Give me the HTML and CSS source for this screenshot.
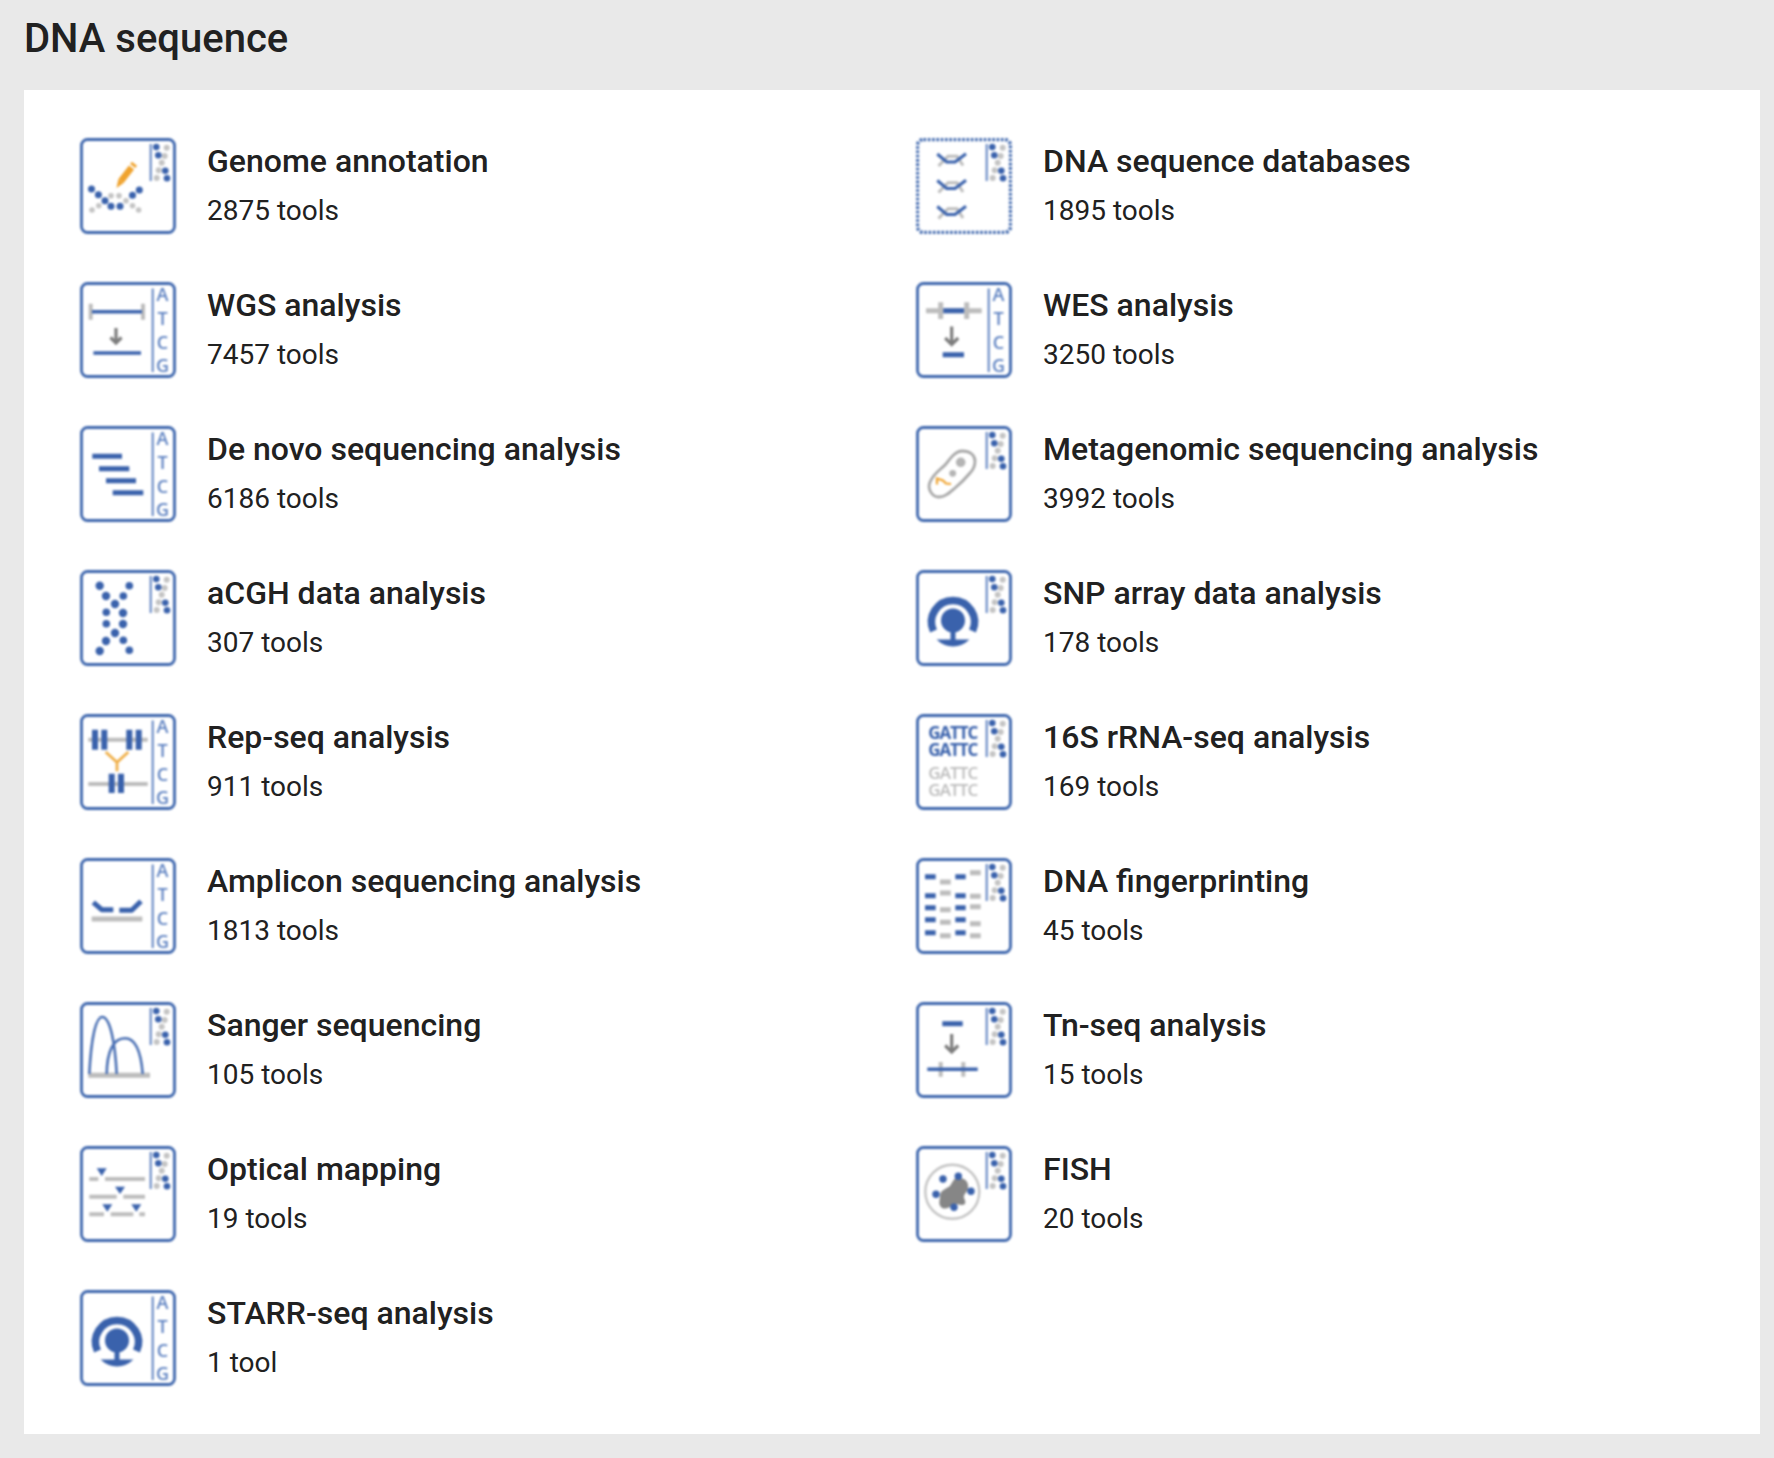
FILE: index.html
```html
<!DOCTYPE html>
<html lang="en">
<head>
    <meta charset="UTF-8">
    <meta name="viewport" content="width=device-width, initial-scale=1.0">
    <title>DNA sequence</title>
    <link rel="stylesheet" href="styles.css">
</head>
<body>
    <!-- shared icon parts -->
    <svg class="icon-defs" xmlns="http://www.w3.org/2000/svg">
        <symbol id="frame" viewBox="0 0 96 96">
            <rect class="frame" x="1.5" y="1.5" width="93" height="93" rx="6"/>
        </symbol>
        <symbol id="atcg" viewBox="0 0 96 96">
            <path class="side-line" d="M72.7 6.5V90"/>
            <text class="side-text" x="82.5" y="18.5">A</text>
            <text class="side-text" x="82.5" y="42.5">T</text>
            <text class="side-text" x="82.5" y="66.5">C</text>
            <text class="side-text" x="82.5" y="89.5">G</text>
        </symbol>
        <symbol id="dots" viewBox="0 0 96 96">
            <path class="side-line" d="M70.7 6V43"/>
            <g class="fill-grey">
                <circle cx="86.7" cy="9.7" r="3"/>
                <circle cx="84.7" cy="18" r="3"/>
                <circle cx="81.7" cy="24.7" r="3"/>
                <circle cx="78.7" cy="32.3" r="3"/>
                <circle cx="76.7" cy="40" r="3"/>
            </g>
            <g class="fill-blue">
                <circle cx="76.3" cy="9" r="3.3"/>
                <circle cx="78.3" cy="17.3" r="3.3"/>
                <circle cx="85.3" cy="32.7" r="3.3"/>
                <circle cx="87" cy="40.3" r="3.3"/>
            </g>
        </symbol>
        <symbol id="receptor" viewBox="0 0 96 96">
            <path class="ring" d="M17.5 61A21.5 21.5 0 1 1 56.5 61"/>
            <circle class="fill-blue" cx="37" cy="50.5" r="12"/>
            <path class="stem" d="M37 58V72"/>
            <path class="fill-blue" d="M20.5 69.5H53.5Q46 76.5 37 76.5Q28 76.5 20.5 69.5Z"/>
        </symbol>
        <symbol id="motif" viewBox="0 0 96 96">
            <path class="thin-grey" d="M22.5 28L32 18.3H41L47 27.5"/>
            <path class="thin-blue" d="M21.3 16L30.7 24H39L50 15.7"/>
        </symbol>
    </svg>

    <h1 class="page-title">DNA sequence</h1>

    <div class="card">
        <div class="tool-item">
            <svg class="tool-icon" viewBox="0 0 96 96">
                <use href="#frame"/><use href="#dots"/>
                <path class="pencil" d="M41 43L51.5 29.5M52.7 28L54.5 25.7"/>
                <path class="pencil-tip" d="M38.4 41L43.6 45L36.5 50Z"/>
                <g class="fill-grey">
                    <circle cx="12" cy="72" r="2.8"/><circle cx="18.8" cy="67.7" r="2.8"/><circle cx="31" cy="57.7" r="2.8"/>
                    <circle cx="39" cy="57.7" r="2.8"/><circle cx="46" cy="62.7" r="2.8"/><circle cx="52.5" cy="67.7" r="2.8"/><circle cx="58.6" cy="72" r="2.8"/>
                </g>
                <g class="fill-blue">
                    <circle cx="11.5" cy="51" r="3.5"/><circle cx="18.4" cy="56.7" r="3.5"/><circle cx="25" cy="62.7" r="3.5"/><circle cx="31" cy="68.3" r="3.5"/>
                    <circle cx="40" cy="68.3" r="3.5"/><circle cx="52.5" cy="57.3" r="3.5"/><circle cx="59.3" cy="52" r="3.5"/>
                </g>
            </svg>
            <div class="tool-text"><div class="tool-name">Genome annotation</div><div class="tool-count">2875 tools</div></div>
        </div>

        <div class="tool-item">
            <svg class="tool-icon" viewBox="0 0 96 96">
                <use href="#frame"/><use href="#dots"/>
                <use href="#motif"/><use href="#motif" y="26.5"/><use href="#motif" y="52.5"/>
                <rect class="frame-cover" x="1.5" y="1.5" width="93" height="93" rx="6"/>
                <rect class="frame-dotted" x="1.5" y="1.5" width="93" height="93" rx="6"/>
            </svg>
            <div class="tool-text"><div class="tool-name">DNA sequence databases</div><div class="tool-count">1895 tools</div></div>
        </div>

        <div class="tool-item">
            <svg class="tool-icon" viewBox="0 0 96 96">
                <use href="#frame"/><use href="#atcg"/>
                <path class="line-grey" d="M10.7 21.7V37.7M63 21.7V37.7"/>
                <path class="line-blue-thin" d="M12 29.7H62M13.4 71H61"/>
                <g transform="translate(36 46)"><path class="arrow" d="M0 0V15M-5.5 9.5L0 15L5.5 9.5"/></g>
            </svg>
            <div class="tool-text"><div class="tool-name">WGS analysis</div><div class="tool-count">7457 tools</div></div>
        </div>

        <div class="tool-item">
            <svg class="tool-icon" viewBox="0 0 96 96">
                <use href="#frame"/><use href="#atcg"/>
                <path class="line-grey-wide" d="M10 28.7H65.7M24.7 20.3V37M50.7 20.3V37"/>
                <path class="line-blue" d="M27.3 28.7H48M26.7 72.7H48"/>
                <g transform="translate(35.7 44.5)"><path class="arrow" d="M0 0V18M-6.5 11.5L0 18L6.5 11.5"/></g>
            </svg>
            <div class="tool-text"><div class="tool-name">WES analysis</div><div class="tool-count">3250 tools</div></div>
        </div>

        <div class="tool-item">
            <svg class="tool-icon" viewBox="0 0 96 96">
                <use href="#frame"/><use href="#atcg"/>
                <path class="line-blue" d="M12.3 30.3H42M19 42.7H49.3M26 54.7H56M32.7 66.7H63.3"/>
            </svg>
            <div class="tool-text"><div class="tool-name">De novo sequencing analysis</div><div class="tool-count">6186 tools</div></div>
        </div>

        <div class="tool-item">
            <svg class="tool-icon" viewBox="0 0 96 96">
                <use href="#frame"/><use href="#dots"/>
                <path class="capsule" d="M14 56C18 47 24 44 29 39C34 33 39 25 46 25C54 25 59 29 59 35C59 41 57 44 54 47C49 53 45 57 39 62C33 67 29 71 23 71C16 71 11 63 14 56Z"/>
                <circle class="fill-grey-dark" cx="44.7" cy="36.3" r="4.8"/>
                <circle class="fill-grey-dark" cx="36.7" cy="47.3" r="3.4"/>
                <path class="squiggle" d="M21 58.5L21 52.5L27 54.5L30 57.5L35 58"/>
            </svg>
            <div class="tool-text"><div class="tool-name">Metagenomic sequencing analysis</div><div class="tool-count">3992 tools</div></div>
        </div>

        <div class="tool-item">
            <svg class="tool-icon" viewBox="0 0 96 96">
                <use href="#frame"/><use href="#dots"/>
                <g class="fill-blue">
                    <circle cx="19.7" cy="15.7" r="4.2"/><circle cx="49.3" cy="15.7" r="3.8"/><circle cx="26" cy="26" r="4.2"/><circle cx="43.3" cy="26" r="3.8"/>
                    <circle cx="35" cy="34" r="4.2"/><circle cx="26.3" cy="42.3" r="3.8"/><circle cx="43" cy="43" r="4.2"/><circle cx="26.3" cy="53.7" r="3.8"/>
                    <circle cx="43" cy="54" r="4.2"/><circle cx="35" cy="63" r="4.2"/><circle cx="26" cy="71" r="4.2"/><circle cx="43.3" cy="70.3" r="3.8"/>
                    <circle cx="19.7" cy="81" r="4.2"/><circle cx="49.3" cy="80.3" r="3.8"/>
                </g>
            </svg>
            <div class="tool-text"><div class="tool-name">aCGH data analysis</div><div class="tool-count">307 tools</div></div>
        </div>

        <div class="tool-item">
            <svg class="tool-icon" viewBox="0 0 96 96">
                <use href="#frame"/><use href="#dots"/><use href="#receptor"/>
            </svg>
            <div class="tool-text"><div class="tool-name">SNP array data analysis</div><div class="tool-count">178 tools</div></div>
        </div>

        <div class="tool-item">
            <svg class="tool-icon" viewBox="0 0 96 96">
                <use href="#frame"/><use href="#atcg"/>
                <path class="line-grey" d="M8.3 25.7H67.7M8.3 70H67.7"/>
                <path class="line-blue-wide" d="M15 15.7V35.7M24.3 15.7V35.7M49.3 15.7V35.7M58.7 15.7V35.7M31.7 59.7V79M41 59.7V79"/>
                <path class="y-link" d="M25.7 38L37 48.3L48.3 38M37 48.3V57.3"/>
            </svg>
            <div class="tool-text"><div class="tool-name">Rep-seq analysis</div><div class="tool-count">911 tools</div></div>
        </div>

        <div class="tool-item">
            <svg class="tool-icon" viewBox="0 0 96 96">
                <use href="#frame"/><use href="#dots"/>
                <text class="gattc gattc-blue" x="12.3" y="24.5" textLength="50">GATTC</text>
                <text class="gattc gattc-blue" x="12.3" y="42" textLength="50">GATTC</text>
                <text class="gattc gattc-grey" x="12.3" y="64.5" textLength="50">GATTC</text>
                <text class="gattc gattc-grey" x="12.3" y="82" textLength="50">GATTC</text>
            </svg>
            <div class="tool-text"><div class="tool-name">16S rRNA-seq analysis</div><div class="tool-count">169 tools</div></div>
        </div>

        <div class="tool-item">
            <svg class="tool-icon" viewBox="0 0 96 96">
                <use href="#frame"/><use href="#atcg"/>
                <path class="line-blue-round" d="M13.3 44.3L21.7 51.7H33.3M39.3 52.3H51.7L61 43.3"/>
                <path class="line-grey-wide" d="M11.7 61H62.3"/>
            </svg>
            <div class="tool-text"><div class="tool-name">Amplicon sequencing analysis</div><div class="tool-count">1813 tools</div></div>
        </div>

        <div class="tool-item">
            <svg class="tool-icon" viewBox="0 0 96 96">
                <use href="#frame"/><use href="#dots"/>
                <path class="line-blue" d="M9 18.7H19.7M9 37.7H19.7M9 49.7H19.7M9 61.7H19.7M9 74.7H19.7M39.3 18.7H49.7M39.3 37.7H49.7M39.3 49.7H49.7M39.3 61.7H49.7M39.3 74.7H49.7"/>
                <path class="line-grey-wide" d="M24 24H34.7M24 35H34.7M24 51.7H34.7M24 64.3H34.7M24 77.7H34.7M54 14.7H64.7M54 38.3H64.7M54 48.7H64.7M54 65.7H64.7M54 77.7H64.7"/>
            </svg>
            <div class="tool-text"><div class="tool-name">DNA fingerprinting</div><div class="tool-count">45 tools</div></div>
        </div>

        <div class="tool-item">
            <svg class="tool-icon" viewBox="0 0 96 96">
                <use href="#frame"/><use href="#dots"/>
                <path class="line-grey-wide" d="M8.3 73.3H70"/>
                <path class="curve" d="M9.3 72C11 40 15 15 22.3 15C30 15 35 40 36.7 72M26.7 72C27 50 33 36.3 45 36.3C56 36.3 61 50 62.7 72"/>
            </svg>
            <div class="tool-text"><div class="tool-name">Sanger sequencing</div><div class="tool-count">105 tools</div></div>
        </div>

        <div class="tool-item">
            <svg class="tool-icon" viewBox="0 0 96 96">
                <use href="#frame"/><use href="#dots"/>
                <path class="line-blue" d="M26.3 21.7H46.7"/>
                <g transform="translate(35.7 32)"><path class="arrow" d="M0 0V18M-6.5 11.5L0 18L6.5 11.5"/></g>
                <path class="line-grey" d="M24.7 60V74.7M47.3 60V74.7"/>
                <path class="line-blue-thin" d="M11.3 67.3H61.7"/>
            </svg>
            <div class="tool-text"><div class="tool-name">Tn-seq analysis</div><div class="tool-count">15 tools</div></div>
        </div>

        <div class="tool-item">
            <svg class="tool-icon" viewBox="0 0 96 96">
                <use href="#frame"/><use href="#dots"/>
                <path class="line-grey" d="M9.3 33H18.3M25 33H65M9.3 50.7H36.7M43.3 50.7H65M9.3 68.3H24M30.7 68.3H53.3M59.3 68.3H65"/>
                <path class="fill-blue" d="M16.7 22.3H26.7L21.7 30ZM35 40.7H45L40 48ZM22.3 58.3H32.3L27.3 65.7ZM51.3 58.3H61.3L56.3 65.7Z"/>
            </svg>
            <div class="tool-text"><div class="tool-name">Optical mapping</div><div class="tool-count">19 tools</div></div>
        </div>

        <div class="tool-item">
            <svg class="tool-icon" viewBox="0 0 96 96">
                <use href="#frame"/><use href="#dots"/>
                <circle class="cell" cx="36.3" cy="45.7" r="27"/>
                <path class="blob" d="M24 50C24 44 30 43 34 40C37 36 38 31 43 32C49 32 53 36 52 42C52 46 47 48 48 52C50 56 50 59 46 59C42 59 40 57 37 59C33 62 28 64 25 61C22 58 24 54 24 50Z"/>
                <g class="fill-blue">
                    <circle cx="27" cy="33" r="3.7"/><circle cx="42.3" cy="30.3" r="3.7"/><circle cx="55" cy="45.3" r="3.7"/><circle cx="20" cy="48.3" r="3.7"/><circle cx="38" cy="61.3" r="3.7"/>
                </g>
            </svg>
            <div class="tool-text"><div class="tool-name">FISH</div><div class="tool-count">20 tools</div></div>
        </div>

        <div class="tool-item">
            <svg class="tool-icon" viewBox="0 0 96 96">
                <use href="#frame"/><use href="#atcg"/><use href="#receptor"/>
            </svg>
            <div class="tool-text"><div class="tool-name">STARR-seq analysis</div><div class="tool-count">1 tool</div></div>
        </div>
    </div>
</body>
</html>
```

FILE: styles.css
```css
* {
    margin: 0;
    padding: 0;
    box-sizing: border-box;
}

body {
    font-family: Roboto, "Liberation Sans", sans-serif;
    background-color: #e9e9e9;
    color: #212121;
    padding: 0 14px 24px 24px;
}

.icon-defs {
    display: none;
}

.page-title {
    font-size: 40px;
    font-weight: 500;
    line-height: 78px;
    height: 78px;
    margin-bottom: 12px;
}

.card {
    background-color: #fff;
    padding: 48px 8px 48px 56px;
    display: grid;
    grid-template-columns: 836px 1fr;
    row-gap: 48px;
}

.tool-item {
    display: flex;
    gap: 31px;
    height: 96px;
}

.tool-icon {
    width: 96px;
    height: 96px;
    flex-shrink: 0;
    filter: blur(0.8px);
}

.tool-name {
    font-size: 32px;
    font-weight: 500;
    line-height: 40px;
    margin-top: 3px;
}

.tool-count {
    font-size: 28px;
    line-height: 36px;
    margin-top: 12px;
}

/* icon parts */
.frame {
    fill: #fff;
    stroke: #3d66ad;
    stroke-width: 2.8;
}

.frame-cover {
    fill: none;
    stroke: #fff;
    stroke-width: 3.4;
}

.frame-dotted {
    fill: none;
    stroke: #3d66ad;
    stroke-width: 3.4;
    stroke-dasharray: 2.6 1.7;
}

.side-line {
    fill: none;
    stroke: #5f83c2;
    stroke-width: 2;
}

.side-text {
    font-family: "Open Sans", "Liberation Sans", sans-serif;
    font-size: 18px;
    font-weight: 600;
    text-anchor: middle;
    fill: #5f83c2;
}

.fill-blue {
    fill: #3a62ac;
}

.fill-grey {
    fill: #c4c4c4;
}

.fill-grey-dark {
    fill: #b4b4b4;
}

.line-blue,
.line-blue-thin,
.line-blue-wide,
.line-blue-round {
    fill: none;
    stroke: #3a62ac;
}

.line-blue {
    stroke-width: 5;
}

.line-blue-thin {
    stroke-width: 3.5;
}

.line-blue-wide {
    stroke-width: 6;
}

.line-blue-round {
    stroke-width: 5;
    stroke-linejoin: round;
}

.line-grey,
.line-grey-wide {
    fill: none;
    stroke: #bdbdbd;
    stroke-width: 4;
}

.line-grey-wide {
    stroke-width: 5;
}

.arrow {
    fill: none;
    stroke: #7d7d7d;
    stroke-width: 3.2;
}

.pencil {
    fill: none;
    stroke: #f0a32e;
    stroke-width: 6.5;
}

.pencil-tip {
    fill: #f0a32e;
}

.ring {
    fill: none;
    stroke: #3a62ac;
    stroke-width: 7.5;
}

.stem {
    fill: none;
    stroke: #3a62ac;
    stroke-width: 5;
}

.thin-blue {
    fill: none;
    stroke: #3a62ac;
    stroke-width: 3;
}

.thin-grey {
    fill: none;
    stroke: #bdbdbd;
    stroke-width: 3;
}

.capsule {
    fill: none;
    stroke: #a8a8a8;
    stroke-width: 2.8;
}

.squiggle {
    fill: none;
    stroke: #f0a32e;
    stroke-width: 2.2;
}

.y-link {
    fill: none;
    stroke: #f0b04a;
    stroke-width: 2.8;
}

.curve {
    fill: none;
    stroke: #4a70b4;
    stroke-width: 2.6;
}

.gattc {
    font-family: "Open Sans", "Liberation Sans", sans-serif;
    font-size: 17px;
}

.gattc-blue {
    font-weight: 700;
    fill: #3a62ac;
}

.gattc-grey {
    font-weight: 600;
    fill: #bdbdbd;
}

.cell {
    fill: none;
    stroke: #c4c4c4;
    stroke-width: 2.4;
}

.blob {
    fill: #868686;
}
```
